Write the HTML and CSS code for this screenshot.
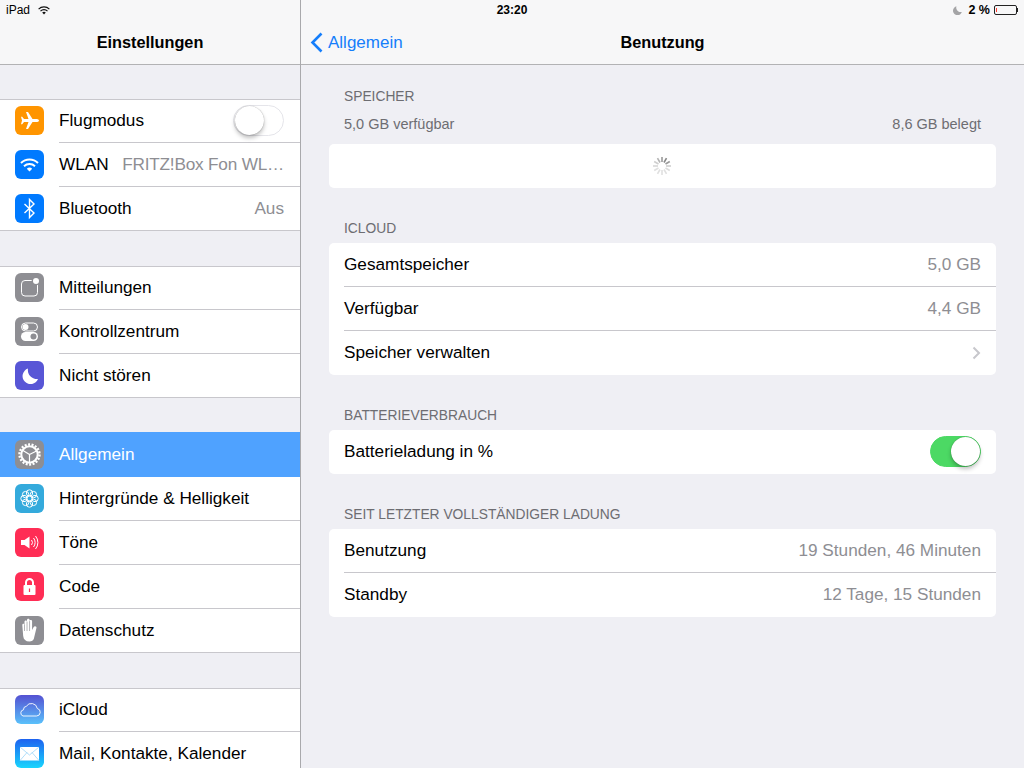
FILE: index.html
```html
<!DOCTYPE html>
<html lang="de">
<head>
    <meta charset="UTF-8">
    <meta name="viewport" content="width=device-width, initial-scale=1.0">
    <title>Einstellungen</title>
    <link rel="stylesheet" href="styles.css">
</head>
<body>
    <div class="statusbar">
        <div class="status-left">
            <span>iPad</span>
            <svg class="status-wifi" viewBox="0 0 12 9"><path d="M.6 3.2a7.6 7.6 0 0 1 10.8 0M2.5 5.1a4.9 4.9 0 0 1 7 0" fill="none" stroke="#111" stroke-width="1.2"/><path d="M4.2 6.6a2.5 2.5 0 0 1 3.6 0L6 8.5z" fill="#111"/></svg>
        </div>
        <div class="status-time">23:20</div>
        <div class="status-right">
            <svg class="status-moon" viewBox="0 0 9 9"><path d="M3.4.3A4.5 4.5 0 1 0 8.8 6 4.6 4.6 0 0 1 3.4.3z" fill="#a4a4a6"/></svg>
            <span>2 %</span>
            <div class="battery"><div class="battery-level"></div></div>
            <div class="battery-nub"></div>
        </div>
    </div>

    <div class="app">
        <aside class="sidebar">
            <div class="nav nav-master"><h1>Einstellungen</h1></div>
            <div class="groups">
                <div class="group">
                    <div class="row">
                        <svg class="icon" style="background:#ff9500" viewBox="0 0 29 29"><path d="M24 14.5c0-1-1.5-1.5-3-1.5h-3.500L13 6h-2l2.500 7H9l-1.800-2.200H6l1 3.700-1 3.700h1.200L9 16h4.500L11 23h2l4.500-7H21c1.500 0 3-.5 3-1.500z" fill="#fff"/></svg>
                        <div class="row-body"><span class="row-title">Flugmodus</span>
                            <div class="switch"><div class="knob"></div></div>
                        </div>
                    </div>
                    <div class="row">
                        <svg class="icon" style="background:#007aff" viewBox="0 0 29 29"><path d="M6 13a12 12 0 0 1 17 0M9 16.200a8 8 0 0 1 11 0" fill="none" stroke="#fff" stroke-width="2"/><path d="M11.800 18.700a4 4 0 0 1 5.400 0L14.500 21.500z" fill="#fff"/></svg>
                        <div class="row-body"><span class="row-title">WLAN</span><span class="row-value row-value-long">FRITZ!Box Fon WL…</span></div>
                    </div>
                    <div class="row">
                        <svg class="icon" style="background:#007aff" viewBox="0 0 29 29"><path d="M9.500 10l9.500 9-4.500 4.500v-18L19 10l-9.500 9" fill="none" stroke="#fff" stroke-width="1.400"/></svg>
                        <div class="row-body"><span class="row-title">Bluetooth</span><span class="row-value">Aus</span></div>
                    </div>
                </div>

                <div class="group group-tight">
                    <div class="row">
                        <svg class="icon" style="background:#8e8e93" viewBox="0 0 29 29"><rect x="6.500" y="7.500" width="16" height="15.500" rx="3.500" fill="none" stroke="#fff"/><circle cx="21" cy="8" r="4.400" fill="#8e8e93"/><circle cx="21" cy="8" r="3" fill="#fff"/></svg>
                        <div class="row-body"><span class="row-title">Mitteilungen</span></div>
                    </div>
                    <div class="row">
                        <svg class="icon" style="background:#8e8e93" viewBox="0 0 29 29"><rect x="6.500" y="6" width="16" height="8" rx="4" fill="none" stroke="#fff"/><circle cx="10.500" cy="10" r="3" fill="#fff"/><rect x="6" y="15" width="17" height="9" rx="4.500" fill="#fff"/><circle cx="18.500" cy="19.500" r="3" fill="#8e8e93"/></svg>
                        <div class="row-body"><span class="row-title">Kontrollzentrum</span></div>
                    </div>
                    <div class="row">
                        <svg class="icon" style="background:#5856d6" viewBox="0 0 29 29"><path d="M13 7.500A8 8 0 1 0 23 18a9 9 0 0 1-10-10.500z" fill="#fff"/></svg>
                        <div class="row-body"><span class="row-title">Nicht stören</span></div>
                    </div>
                </div>

                <div class="group">
                    <div class="row selected">
                        <svg class="icon" style="background:#8e8e93" viewBox="0 0 29 29"><circle cx="14.500" cy="14.500" r="8.200" fill="none" stroke="#fff" stroke-width="2"/><circle cx="14.500" cy="14.500" r="10" fill="none" stroke="#fff" stroke-width="2.400" stroke-dasharray="2 1.490"/><path d="M14.500 14.500L8 10.500M14.500 14.500L21.500 11M14.500 14.500V22" stroke="#fff" stroke-width="1.200"/></svg>
                        <div class="row-body"><span class="row-title">Allgemein</span></div>
                    </div>
                    <div class="row">
                        <svg class="icon" style="background:#34aadc" viewBox="0 0 29 29">
                            <g fill="none" stroke="#fff" stroke-width="1">
                                <circle cx="14.500" cy="14.500" r="3"/>
                                <circle cx="14.500" cy="9" r="3.200"/><circle cx="14.500" cy="20" r="3.200"/>
                                <circle cx="9" cy="14.500" r="3.200"/><circle cx="20" cy="14.500" r="3.200"/>
                                <circle cx="10.600" cy="10.600" r="3.200"/><circle cx="18.400" cy="10.600" r="3.200"/>
                                <circle cx="10.600" cy="18.400" r="3.200"/><circle cx="18.400" cy="18.400" r="3.200"/>
                            </g>
                        </svg>
                        <div class="row-body"><span class="row-title">Hintergründe &amp; Helligkeit</span></div>
                    </div>
                    <div class="row">
                        <svg class="icon" style="background:#ff2d55" viewBox="0 0 29 29"><path d="M6 12h3.500L14.500 8.500v12L9.500 17H6z" fill="#fff"/><path d="M16.500 12a4 4 0 0 1 0 5M18.500 10a7 7 0 0 1 0 9M20.500 8a10 10 0 0 1 0 13" fill="none" stroke="#fff" stroke-width="1"/></svg>
                        <div class="row-body"><span class="row-title">Töne</span></div>
                    </div>
                    <div class="row">
                        <svg class="icon" style="background:#ff2d55" viewBox="0 0 29 29"><path d="M11 13v-2.500a3.500 3.500 0 0 1 7 0V13" fill="none" stroke="#fff" stroke-width="2"/><rect x="8.500" y="13" width="12" height="10" rx="1" fill="#fff"/><path d="M14.500 16.500v3.500" stroke="#ff2d55" stroke-width="1.200"/></svg>
                        <div class="row-body"><span class="row-title">Code</span></div>
                    </div>
                    <div class="row">
                        <svg class="icon" style="background:#8e8e93" viewBox="0 0 29 29"><g transform="translate(-1.500 -1.500) scale(1.1)"><path d="M8 9.500c0-1.400 2-1.400 2 0V6.500c0-1.400 2.300-1.400 2.300 0V5c0-1.400 2.300-1.400 2.300 0v1c0-1.400 2.300-1.400 2.300 0v8l1.300-2.500c.9-1.700 3.300-.8 2.600.9L18.500 22c-.7 1.500-1.900 2.500-4 2.500-3.500 0-5.300-1.700-5.700-5z" fill="#fff"/><path d="M10 9v6M12.300 6.500V15M14.600 6v9" stroke="#8e8e93" stroke-width=".6"/></g></svg>
                        <div class="row-body"><span class="row-title">Datenschutz</span></div>
                    </div>
                </div>

                <div class="group">
                    <div class="row">
                        <svg class="icon" viewBox="0 0 29 29"><defs><linearGradient id="cloudBg" x1="0" y1="0" x2="0" y2="1"><stop offset="0" stop-color="#5451d2"/><stop offset="1" stop-color="#5ac1fb"/></linearGradient></defs><rect width="29" height="29" fill="url(#cloudBg)"/><path d="M8 21h13.500a3.800 3.800 0 0 0 .8-7.500 6 6 0 0 0-11-2.200A3.300 3.300 0 0 0 8.500 14.800 3.200 3.200 0 0 0 8 21z" fill="none" stroke="#fff" stroke-width=".9"/></svg>
                        <div class="row-body"><span class="row-title">iCloud</span></div>
                    </div>
                    <div class="row">
                        <svg class="icon" viewBox="0 0 29 29"><defs><linearGradient id="mailBg" x1="0" y1="0" x2="0" y2="1"><stop offset="0" stop-color="#1d62f0"/><stop offset="1" stop-color="#19d5fd"/></linearGradient></defs><rect width="29" height="29" fill="url(#mailBg)"/><rect x="5" y="8" width="19" height="13.500" fill="#fff"/><path d="M5 8l9.500 8L24 8M5 21.500l7-8M24 21.500l-7-8" fill="none" stroke="#8fd0f7" stroke-width=".7"/></svg>
                        <div class="row-body"><span class="row-title">Mail, Kontakte, Kalender</span></div>
                    </div>
                </div>
            </div>
        </aside>

        <main class="detail">
            <div class="nav">
                <a class="back">
                    <svg class="back-chevron" viewBox="0 0 13 21"><path d="M11.500 1.500L2.500 10.500l9 9" fill="none" stroke="#157efb" stroke-width="2.600"/></svg>
                    <span class="back-label">Allgemein</span>
                </a>
                <h1>Benutzung</h1>
            </div>
            <div class="content">
                <section class="section">
                    <h2 class="section-label">SPEICHER</h2>
                    <div class="usage"><span>5,0 GB verfügbar</span><span>8,6 GB belegt</span></div>
                    <div class="card card-loading">
                        <svg class="spinner" viewBox="0 0 20 20">
                            <g stroke-width="1.600">
                                <path d="M10 1v5" stroke="#9a9a9a"/>
                                <path d="M14.500 2.200l-2.500 4.300" stroke="#888"/>
                                <path d="M17.800 5.500l-4.300 2.500" stroke="#9a9a9a"/>
                                <path d="M19 10h-5" stroke="#cfcfcf"/>
                                <path d="M17.800 14.500l-4.300-2.500" stroke="#dcdcdc"/>
                                <path d="M14.500 17.800l-2.500-4.300" stroke="#e0e0e0"/>
                                <path d="M10 19v-5" stroke="#e0e0e0"/>
                                <path d="M5.500 17.800l2.500-4.300" stroke="#e0e0e0"/>
                                <path d="M2.200 14.500l4.300-2.500" stroke="#e0e0e0"/>
                                <path d="M1 10h5" stroke="#d8d8d8"/>
                                <path d="M2.200 5.500l4.300 2.500" stroke="#cfcfcf"/>
                                <path d="M5.500 2.200l2.500 4.300" stroke="#b4b4b4"/>
                            </g>
                        </svg>
                    </div>
                </section>

                <section class="section">
                    <h2 class="section-label">ICLOUD</h2>
                    <div class="card">
                        <div class="card-row"><span>Gesamtspeicher</span><span class="row-value">5,0 GB</span></div>
                        <div class="card-row"><span>Verfügbar</span><span class="row-value">4,4 GB</span></div>
                        <div class="card-row"><span>Speicher verwalten</span>
                            <svg class="chevron" viewBox="0 0 9 14"><path d="M1.500 1.500L7 7l-5.500 5.500" fill="none" stroke="#c7c7cc" stroke-width="2"/></svg>
                        </div>
                    </div>
                </section>

                <section class="section">
                    <h2 class="section-label">BATTERIEVERBRAUCH</h2>
                    <div class="card">
                        <div class="card-row"><span>Batterieladung in %</span>
                            <div class="switch switch-on"><div class="knob"></div></div>
                        </div>
                    </div>
                </section>

                <section class="section">
                    <h2 class="section-label">SEIT LETZTER VOLLSTÄNDIGER LADUNG</h2>
                    <div class="card">
                        <div class="card-row"><span>Benutzung</span><span class="row-value">19 Stunden, 46 Minuten</span></div>
                        <div class="card-row"><span>Standby</span><span class="row-value">12 Tage, 15 Stunden</span></div>
                    </div>
                </section>
            </div>
        </main>
    </div>
</body>
</html>
```

FILE: styles.css
```css
* {
    margin: 0;
    padding: 0;
    box-sizing: border-box;
}

html, body {
    height: 100%;
    overflow: hidden;
}

body {
    font-family: "Liberation Sans", Arial, sans-serif;
    font-size: 17.2px;
    color: #000;
    background: #efeff4;
}

.app {
    display: flex;
    height: 768px;
}

/* status bar lies over both nav bars */
.statusbar {
    position: absolute;
    z-index: 2;
    top: 0;
    left: 0;
    width: 1024px;
    height: 20px;
    padding: 0 6px;
    display: flex;
    align-items: center;
    justify-content: space-between;
    font-size: 12px;
    color: #000;
}

.status-left,
.status-right {
    width: 200px;
    display: flex;
    align-items: center;
}

.status-right {
    justify-content: flex-end;
    font-weight: 700;
    font-size: 12.5px;
}

.status-left {
    gap: 8px;
}

.status-time {
    font-weight: 700;
}

.status-wifi {
    width: 12px;
    height: 9px;
}

.status-moon {
    width: 9px;
    height: 9px;
    margin-right: 6px;
}

.battery {
    width: 23px;
    height: 10px;
    margin-left: 4px;
    padding: 2px 1px;
    border: 1px solid #222;
    border-radius: 2px;
}

.battery-level {
    width: 1px;
    height: 100%;
    background: #ff3b30;
}

.battery-nub {
    width: 1px;
    height: 4px;
    background: #222;
}

.sidebar {
    width: 301px;
    flex-shrink: 0;
    border-right: 1px solid #a9a9ac;
    overflow: hidden;
}

.detail {
    flex: 1;
}

.nav {
    height: 65px;
    padding-top: 20px;
    background: #f7f7f8;
    border-bottom: 1px solid #b2b2b4;
    display: flex;
    align-items: center;
    justify-content: center;
    position: relative;
}

.nav h1 {
    font-size: 16.3px;
    font-weight: 700;
}

.back {
    position: absolute;
    left: 9px;
    top: 20px;
    height: 44px;
    display: flex;
    align-items: center;
    gap: 5px;
    font-size: 17px;
    color: #157efb;
}

.back-chevron {
    width: 13px;
    height: 21px;
}

.back-label {
    margin-top: 1px;
}

.groups {
    padding-top: 34px;
}

.group {
    background: #fff;
    border-top: 1px solid #c8c7cc;
    border-bottom: 1px solid #c8c7cc;
    margin-bottom: 35px;
}

.group-tight {
    margin-bottom: 34px;
}

.row {
    height: 44px;
    display: flex;
    align-items: flex-start;
}

.row:first-child,
.row:last-child {
    height: 43px;
}

.icon {
    width: 29px;
    height: 29px;
    margin: 7px 15px 0;
    border-radius: 6px;
    flex-shrink: 0;
}

.row:first-child .icon {
    margin-top: 6px;
}

.row-body {
    flex: 1;
    min-width: 0;
    height: 100%;
    padding-right: 16px;
    border-bottom: 1px solid #c8c7cc;
    display: flex;
    align-items: center;
    justify-content: space-between;
}

.row:first-child .row-body {
    padding-bottom: 1px;
}

.row:last-child .row-body {
    border-bottom: none;
}

.row.selected {
    height: 45px;
    margin-top: -1px;
    background: #4fa2ff;
    color: #fff;
}

.row.selected .row-body {
    border-bottom: none;
}

.row.selected .icon {
    margin-top: 8px;
}

.row-value {
    color: #8e8e93;
}

.row-value-long {
    letter-spacing: -0.2px;
}

.switch {
    position: relative;
    width: 51px;
    height: 31px;
    border: 1px solid #e5e5ea;
    border-radius: 16px;
    background: #fff;
}

.switch-on {
    background: #4cd964;
    border-color: #4cd964;
}

.knob {
    position: absolute;
    left: 1px;
    top: 0;
    width: 29px;
    height: 29px;
    border-radius: 50%;
    background: #fff;
    box-shadow: 0 3px 4px rgba(0, 0, 0, 0.25), 0 0 1px rgba(0, 0, 0, 0.4);
}

.switch-on .knob {
    left: 20px;
}

.content {
    padding: 23px 28px 0;
}

.section {
    margin-bottom: 32px;
}

.section-label {
    height: 16px;
    margin-bottom: 7px;
    padding-left: 15px;
    font-size: 13.8px;
    font-weight: 400;
    line-height: 18px;
    color: #6d6d72;
}

.usage {
    height: 16px;
    margin: 12px 0;
    padding: 0 15px;
    display: flex;
    justify-content: space-between;
    font-size: 14.5px;
    line-height: 17px;
    color: #6d6d72;
}

.section:first-child .section-label {
    margin-bottom: 0;
}

.card {
    background: #fff;
    border-radius: 5px;
    padding-left: 15px;
}

.card-loading {
    height: 44px;
    padding-left: 0;
    display: flex;
    align-items: center;
    justify-content: center;
}

.spinner {
    width: 20px;
    height: 20px;
    margin-right: 1px;
}

.card-row {
    height: 44px;
    padding-right: 15px;
    border-bottom: 1px solid #c8c7cc;
    display: flex;
    align-items: center;
    justify-content: space-between;
}

.card-row:last-child {
    border-bottom-color: transparent;
}

.chevron {
    width: 9px;
    height: 14px;
}
```
